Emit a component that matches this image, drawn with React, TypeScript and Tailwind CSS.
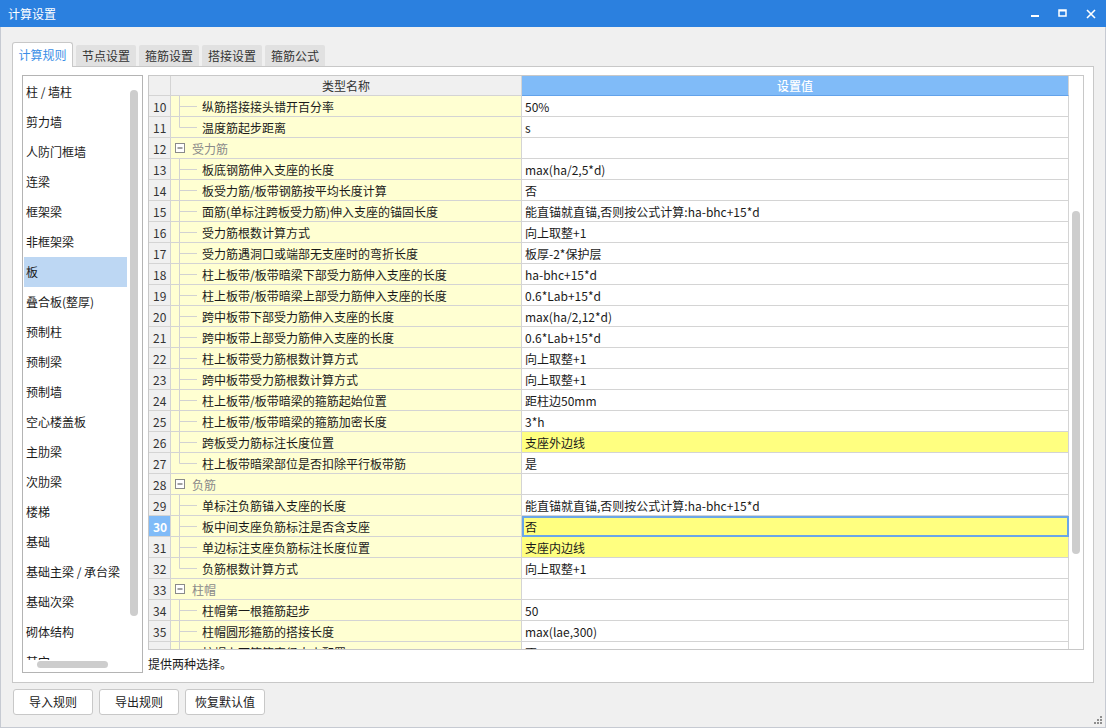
import React from 'react'

type Row = {
  n: number
  name: string
  value?: string
  group?: boolean
  last?: boolean
  hl?: boolean
  sel?: boolean
}

const rows: Row[] = [
  { n: 10, name: '纵筋搭接接头错开百分率', value: '50%' },
  { n: 11, name: '温度筋起步距离', value: 's', last: true },
  { n: 12, name: '受力筋', group: true },
  { n: 13, name: '板底钢筋伸入支座的长度', value: 'max(ha/2,5*d)' },
  { n: 14, name: '板受力筋/板带钢筋按平均长度计算', value: '否' },
  { n: 15, name: '面筋(单标注跨板受力筋)伸入支座的锚固长度', value: '能直锚就直锚,否则按公式计算:ha-bhc+15*d' },
  { n: 16, name: '受力筋根数计算方式', value: '向上取整+1' },
  { n: 17, name: '受力筋遇洞口或端部无支座时的弯折长度', value: '板厚-2*保护层' },
  { n: 18, name: '柱上板带/板带暗梁下部受力筋伸入支座的长度', value: 'ha-bhc+15*d' },
  { n: 19, name: '柱上板带/板带暗梁上部受力筋伸入支座的长度', value: '0.6*Lab+15*d' },
  { n: 20, name: '跨中板带下部受力筋伸入支座的长度', value: 'max(ha/2,12*d)' },
  { n: 21, name: '跨中板带上部受力筋伸入支座的长度', value: '0.6*Lab+15*d' },
  { n: 22, name: '柱上板带受力筋根数计算方式', value: '向上取整+1' },
  { n: 23, name: '跨中板带受力筋根数计算方式', value: '向上取整+1' },
  { n: 24, name: '柱上板带/板带暗梁的箍筋起始位置', value: '距柱边50mm' },
  { n: 25, name: '柱上板带/板带暗梁的箍筋加密长度', value: '3*h' },
  { n: 26, name: '跨板受力筋标注长度位置', value: '支座外边线', hl: true },
  { n: 27, name: '柱上板带暗梁部位是否扣除平行板带筋', value: '是', last: true },
  { n: 28, name: '负筋', group: true },
  { n: 29, name: '单标注负筋锚入支座的长度', value: '能直锚就直锚,否则按公式计算:ha-bhc+15*d' },
  { n: 30, name: '板中间支座负筋标注是否含支座', value: '否', hl: true, sel: true },
  { n: 31, name: '单边标注支座负筋标注长度位置', value: '支座内边线', hl: true },
  { n: 32, name: '负筋根数计算方式', value: '向上取整+1', last: true },
  { n: 33, name: '柱帽', group: true },
  { n: 34, name: '柱帽第一根箍筋起步', value: '50' },
  { n: 35, name: '柱帽圆形箍筋的搭接长度', value: 'max(lae,300)' },
  { n: 36, name: '柱帽上下箍筋直径大小配置', value: '否' },
]

const items = [
  '柱 / 墙柱', '剪力墙', '人防门框墙', '连梁', '框架梁', '非框架梁', '板', '叠合板(整厚)',
  '预制柱', '预制梁', '预制墙', '空心楼盖板', '主肋梁', '次肋梁', '楼梯', '基础',
  '基础主梁 / 承台梁', '基础次梁', '砌体结构', '其它',
]

const tabs = ['计算规则', '节点设置', '箍筋设置', '搭接设置', '箍筋公式']

function Connector({ last }: { last?: boolean }) {
  return (
    <svg width="26" height="20" className="shrink-0">
      <line x1="8.5" y1="0" x2="8.5" y2={last ? 10.5 : 20} stroke="#d2d2d2" />
      <line x1="8.5" y1="10.5" x2="26" y2="10.5" stroke="#d2d2d2" />
    </svg>
  )
}

function GroupBox() {
  return (
    <svg width="14" height="20" className="shrink-0 ml-[4px]">
      <rect x="0.5" y="5.5" width="9" height="9" fill="#fff" stroke="#8a8a8a" />
      <line x1="2.5" y1="10" x2="7.5" y2="10" stroke="#444" />
    </svg>
  )
}

function TableRow({ r }: { r: Row }) {
  return (
    <div className="flex h-[21px] shrink-0 leading-[20px]">
      <div
        className={`w-[22px] pl-[4px] pt-px border-r border-b border-[#d4d4d4] ${
          r.sel ? 'bg-[#80bbf8] text-white font-bold' : 'bg-[#f0f0f0] text-[#333]'
        }`}
      >
        {r.n}
      </div>
      <div className="w-[351px] bg-[#ffffd2] border-r border-b border-[#d4d4d4] flex items-start">
        {r.group ? (
          <>
            <GroupBox />
            <span className="text-[#8a8a8a] ml-[3px] pt-px">{r.name}</span>
          </>
        ) : (
          <>
            <Connector last={r.last} />
            <span className="ml-[5px] pt-px whitespace-nowrap">{r.name}</span>
          </>
        )}
      </div>
      <div
        className={`w-[547px] pl-[3px] pt-px border-r border-b border-[#d4d4d4] whitespace-nowrap ${
          r.hl ? 'bg-[#ffff80]' : 'bg-white'
        } ${r.sel ? 'outline-2 outline-[#6aa6e8] -outline-offset-2' : ''}`}
      >
        {r.value}
      </div>
    </div>
  )
}

export default function App() {
  return (
    <div className="w-[1106px] h-[728px] bg-[#f0f0f0] flex flex-col text-[12px] text-[#1a1a1a] font-['Noto_Sans_CJK_SC','Noto_Sans',sans-serif] overflow-hidden">
      {/* title bar */}
      <div className="h-[27px] bg-[#2b80df] flex items-center justify-between shrink-0">
        <span className="pl-[8px] text-white text-[12px]">计算设置</span>
        <div className="flex items-center h-full">
          <svg width="10" height="10" className="mr-[18px]">
            <rect x="1" y="6" width="8" height="2" fill="#fff" />
          </svg>
          <svg width="10" height="10" className="mr-[18px]">
            <rect x="1" y="1" width="7" height="6" fill="none" stroke="#fff" strokeWidth="1.5" />
            <rect x="1" y="1" width="7" height="1.5" fill="#fff" />
          </svg>
          <svg width="10" height="10" className="mr-[10px]">
            <path d="M1 1 L9 9 M9 1 L1 9" stroke="#fff" strokeWidth="1.6" />
          </svg>
        </div>
      </div>

      <div className="flex-1 relative flex flex-col border-x border-b border-[#c6cad2] px-[11px]">
        {/* tabs */}
        <div className="flex items-end mt-[15px] h-[25px] relative z-10 -mb-px">
          {tabs.map((t, i) =>
            i === 0 ? (
              <div
                key={t}
                className="w-[61px] h-[25px] bg-white border border-b-0 border-[#c8c8c8] rounded-t-[3px] flex items-center justify-center text-[#3a8ee6]"
              >
                {t}
              </div>
            ) : (
              <div
                key={t}
                className="w-[60px] h-[21px] bg-[#e1e1e1] ml-[3px] mb-px rounded-t-[2px] flex items-center justify-center text-[#333]"
              >
                {t}
              </div>
            )
          )}
        </div>

        {/* panel */}
        <div className="w-[1082px] h-[617px] bg-white border border-[#c8c8c8] flex pl-[9px] pt-[8px]">
          {/* left list */}
          <div className="w-[121px] h-[598px] border border-[#b4b4b4] relative overflow-hidden shrink-0">
            <div className="flex flex-col pt-[1px]">
              {items.map((it) => (
                <div
                  key={it}
                  className={`h-[30px] w-[103px] ml-[1px] pl-[2px] flex items-center whitespace-nowrap ${
                    it === '板' ? 'bg-[#bdd7f3]' : ''
                  }`}
                >
                  {it}
                </div>
              ))}
            </div>
            <div className="absolute left-[107px] top-[14px] w-[8px] h-[526px] rounded-full bg-[#cdcdcd]" />
            <div className="absolute left-0 right-0 bottom-0 h-[12px] bg-white">
              <div className="ml-[14px] mt-px w-[71px] h-[7px] rounded-full bg-[#cdcdcd]" />
            </div>
          </div>

          {/* table + hint */}
          <div className="ml-[5px] flex flex-col">
            <div className="w-[936px] h-[575px] border border-[#c8c8c8] bg-white flex overflow-hidden">
              <div className="flex flex-col">
                <div className="flex h-[20px] shrink-0">
                  <div className="w-[22px] bg-[#f0f0f0] border-r border-b border-[#d4d4d4]" />
                  <div className="w-[351px] bg-[#f0f0f0] border-r border-b border-[#d4d4d4] flex items-center justify-center text-[#333]">
                    类型名称
                  </div>
                  <div className="w-[547px] bg-[#80bbf8] border-r border-b border-r-[#d4d4d4] border-b-[#62a2ea] flex items-center justify-center text-white font-medium">
                    设置值
                  </div>
                </div>
                {rows.map((r) => (
                  <TableRow key={r.n} r={r} />
                ))}
              </div>
              <div className="w-[14px] shrink-0 bg-white">
                <div className="ml-[3px] mt-[135px] w-[8px] h-[343px] rounded-full bg-[#cdcdcd]" />
              </div>
            </div>
            <div className="mt-[6px] leading-[16px]">提供两种选择。</div>
          </div>
        </div>

        {/* buttons */}
        <div className="flex gap-[6px] mt-[6px] ml-px">
          {['导入规则', '导出规则', '恢复默认值'].map((b) => (
            <div
              key={b}
              className="w-[80px] h-[26px] bg-white border border-[#c8c8c8] rounded-[3px] flex items-center justify-center text-[#222]"
            >
              {b}
            </div>
          ))}
        </div>

        {/* resize grip */}
        <svg width="10" height="10" className="absolute right-[2px] bottom-[2px]">
          <rect x="7" y="1" width="2" height="2" fill="#8f8f8f" />
          <rect x="4" y="4" width="2" height="2" fill="#8f8f8f" />
          <rect x="7" y="4" width="2" height="2" fill="#8f8f8f" />
          <rect x="1" y="7" width="2" height="2" fill="#8f8f8f" />
          <rect x="4" y="7" width="2" height="2" fill="#8f8f8f" />
          <rect x="7" y="7" width="2" height="2" fill="#8f8f8f" />
        </svg>
      </div>
    </div>
  )
}
